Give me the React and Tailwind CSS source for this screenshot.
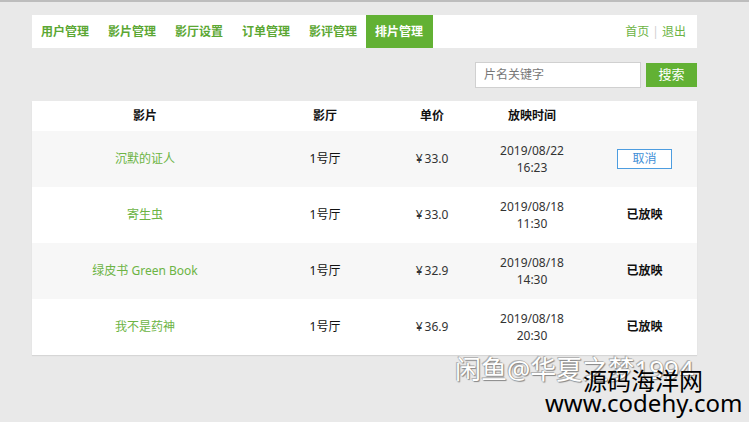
import React from "react";

const rows = [
  { name: "沉默的证人", hall: "1号厅", price: "33.0", date: "2019/08/22", time: "16:23", cancel: true },
  { name: "寄生虫", hall: "1号厅", price: "33.0", date: "2019/08/18", time: "11:30" },
  { name: "绿皮书 Green Book", hall: "1号厅", price: "32.9", date: "2019/08/18", time: "14:30" },
  { name: "我不是药神", hall: "1号厅", price: "36.9", date: "2019/08/18", time: "20:30" },
];

const tabs = ["用户管理", "影片管理", "影厅设置", "订单管理", "影评管理", "排片管理"];

export default function App() {
  return (
    <div
      className="relative w-[749px] h-[422px] overflow-hidden bg-[#e9e9e9] border-t-2 border-[#bdbdbd] text-[12px]"
      style={{ fontFamily: '"Noto Sans", "Noto Sans CJK SC", sans-serif' }}
    >
      <div className="ml-[32px] w-[665px] pt-[13px]">
        <div className="flex h-[33px] items-stretch bg-white">
          {tabs.map((t, i) => (
            <div
              key={t}
              className={
                "flex items-center px-[9.5px] font-bold leading-none " +
                (i === 5 ? "bg-[#62b134] text-white -ml-[1px]" : "text-[#5ba733]") +
                (i === 0 ? " pl-[9px]" : "")
              }
            >
              {t}
            </div>
          ))}
          <div className="ml-auto flex items-center pr-[11px] text-[#6cb444] leading-none">
            <span>首页</span>
            <span className="mx-[3px] text-[#cfcfcf]">|</span>
            <span>退出</span>
          </div>
        </div>

        <div className="flex justify-end items-center mt-[14px] h-[26px]">
          <div className="w-[166px] h-[26px] bg-white border border-[#d0d0d0] flex items-center pl-[8px] text-[#777]">
            片名关键字
          </div>
          <div className="ml-[5px] w-[51px] h-[24px] bg-[#62b134] text-white flex items-center justify-center text-[13px]">
            搜索
          </div>
        </div>

        <div className="mt-[13px] bg-white shadow-[0_1px_1px_rgba(0,0,0,0.08)]">
          <div className="grid grid-cols-[226px_134px_80px_120px_105px] h-[30px] items-center font-bold text-[#111] text-center">
            <div>影片</div>
            <div>影厅</div>
            <div>单价</div>
            <div>放映时间</div>
            <div></div>
          </div>
          {rows.map((r, i) => (
            <div
              key={r.name}
              className={
                "grid grid-cols-[226px_134px_80px_120px_105px] h-[56px] items-center text-center " +
                (i % 2 === 0 ? "bg-[#f7f7f7]" : "bg-white")
              }
            >
              <div className="text-[#6cb444]">{r.name}</div>
              <div className="text-[#111]">{r.hall}</div>
              <div className="text-[#333]">
                <span className="mr-[2px]">¥</span>
                {r.price}
              </div>
              <div className="text-[#333] leading-[17px]">
                <div>{r.date}</div>
                <div>{r.time}</div>
              </div>
              <div className="flex justify-center">
                {r.cancel ? (
                  <div className="w-[55px] h-[20px] border border-[#4d9de0] bg-white text-[#3f8fd6] flex items-center justify-center">
                    取消
                  </div>
                ) : (
                  <span className="font-bold text-[#111]">已放映</span>
                )}
              </div>
            </div>
          ))}
        </div>
      </div>

      <div
        className="absolute left-[455px] top-[354px] text-[26px] leading-none text-white whitespace-nowrap"
        style={{ textShadow: "0 0 1px #777, 1px 1px 1px #888, -1px -1px 0 #bbb" }}
      >
        闲鱼@华夏之梦1994
      </div>
      <div className="absolute left-[583px] top-[367px] text-[24px] leading-none text-black whitespace-nowrap">
        源码海洋网
      </div>
      <div className="absolute left-[545px] top-[389px] text-[24px] leading-none text-black whitespace-nowrap">
        www.codehy.com
      </div>
    </div>
  );
}
